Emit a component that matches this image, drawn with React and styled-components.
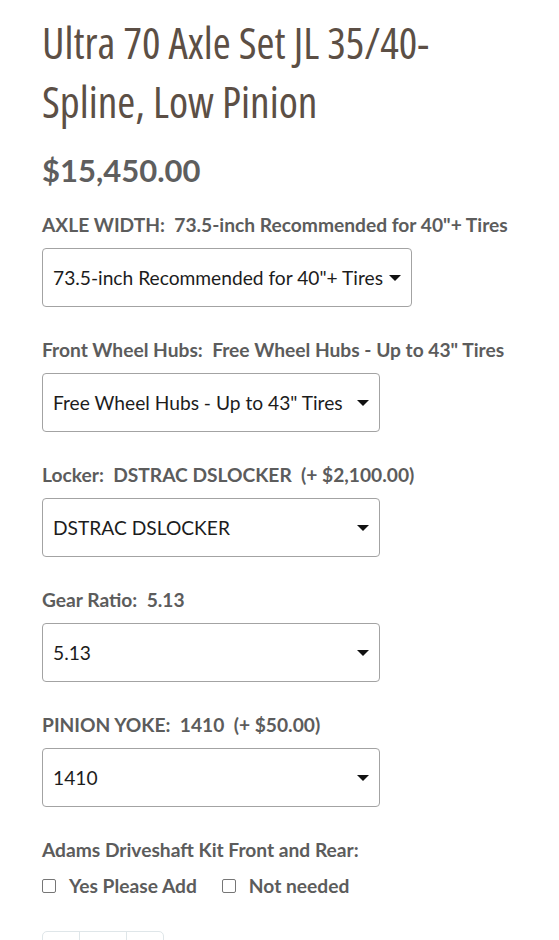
import React from "react";
import styled, { createGlobalStyle } from "styled-components";

const options = [
  {
    name: "AXLE WIDTH:",
    value: "73.5-inch Recommended for 40\"+ Tires",
    choice: "73.5-inch Recommended for 40\"+ Tires",
  },
  {
    name: "Front Wheel Hubs:",
    value: "Free Wheel Hubs - Up to 43\" Tires",
    choice: "Free Wheel Hubs - Up to 43\" Tires",
  },
  {
    name: "Locker:",
    value: "DSTRAC DSLOCKER  (+ $2,100.00)",
    choice: "DSTRAC DSLOCKER",
  },
  { name: "Gear Ratio:", value: "5.13", choice: "5.13" },
  {
    name: "PINION YOKE:",
    value: "1410  (+ $50.00)",
    choice: "1410",
  },
];

export default function App() {
  return (
    <>
      <GlobalStyle />
      <Product.Wrapper>
        <Product.Title>
          Ultra 70 Axle Set JL 35/40-Spline, Low Pinion
        </Product.Title>
        <Product.Price>$15,450.00</Product.Price>

        {options.map((opt) => (
          <Option.Group key={opt.name}>
            <Option.Label>
              {opt.name}  {opt.value}
            </Option.Label>
            <Option.Select>
              <span>{opt.choice}</span>
              <Option.Caret />
            </Option.Select>
          </Option.Group>
        ))}

        <Option.Group>
          <Option.Label>Adams Driveshaft Kit Front and Rear:</Option.Label>
          <Checks.Row>
            <Checks.Item>
              <Checks.Box type="checkbox" />
              Yes Please Add
            </Checks.Item>
            <Checks.Item>
              <Checks.Box type="checkbox" />
              Not needed
            </Checks.Item>
          </Checks.Row>
        </Option.Group>

        <Quantity.Wrapper>
          <Quantity.Cell />
          <Quantity.Cell $wide />
          <Quantity.Cell />
        </Quantity.Wrapper>
      </Product.Wrapper>
    </>
  );
}

const GlobalStyle = createGlobalStyle`
  body {
    margin: 0;
    background: #ffffff;
  }
`;

const Product = {
  Wrapper: styled.main`
    padding: 13px 42px 40px;
    font-family: Lato, "Liberation Sans", sans-serif;
  `,
  Title: styled.h1`
    margin: 0;
    font-family: "Open Sans", "Roboto", sans-serif;
    font-stretch: 75%;
    font-weight: 500;
    font-size: 43.5px;
    line-height: 59px;
    color: #5c4f45;
  `,
  Price: styled.div`
    margin-top: 19px;
    font-size: 31px;
    font-weight: 700;
    line-height: 40px;
    color: #5e5e5e;
  `,
};

const Option = {
  Group: styled.div`
    margin-top: 22px;

    & + & {
      margin-top: 30px;
    }
  `,
  Label: styled.div`
    font-size: 19.2px;
    font-weight: 700;
    line-height: 26px;
    color: #5c5c5c;
    white-space: pre-wrap;
  `,
  Select: styled.div`
    margin-top: 10px;
    box-sizing: border-box;
    display: inline-flex;
    align-items: center;
    justify-content: space-between;
    gap: 6px;
    min-width: 338px;
    height: 59px;
    padding: 0 10px;
    border: 1px solid #a3a3a3;
    border-radius: 4px;
    font-size: 19.2px;
    color: #1c1c1c;
  `,
  Caret: styled.i`
    display: block;
    width: 0;
    height: 0;
    border-left: 6px solid transparent;
    border-right: 6px solid transparent;
    border-top: 6px solid #111111;
  `,
};

const Checks = {
  Row: styled.div`
    display: flex;
    gap: 25px;
    margin-top: 10px;
  `,
  Item: styled.label`
    display: flex;
    align-items: center;
    gap: 13px;
    font-size: 19.2px;
    font-weight: 700;
    line-height: 26px;
    color: #5c5c5c;
  `,
  Box: styled.input`
    appearance: none;
    margin: 0;
    width: 14px;
    height: 14px;
    border: 1px solid #767676;
    border-radius: 2px;
    background: #ffffff;
  `,
};

const Quantity = {
  Wrapper: styled.div`
    margin-top: 32px;
    display: inline-flex;
    height: 44px;
    border: 1px solid #dfe6e9;
    border-radius: 5px;
  `,
  Cell: styled.div`
    width: ${({ $wide }) => ($wide ? "46px" : "36px")};

    & + & {
      border-left: 1px solid #dfe6e9;
    }
  `,
};
